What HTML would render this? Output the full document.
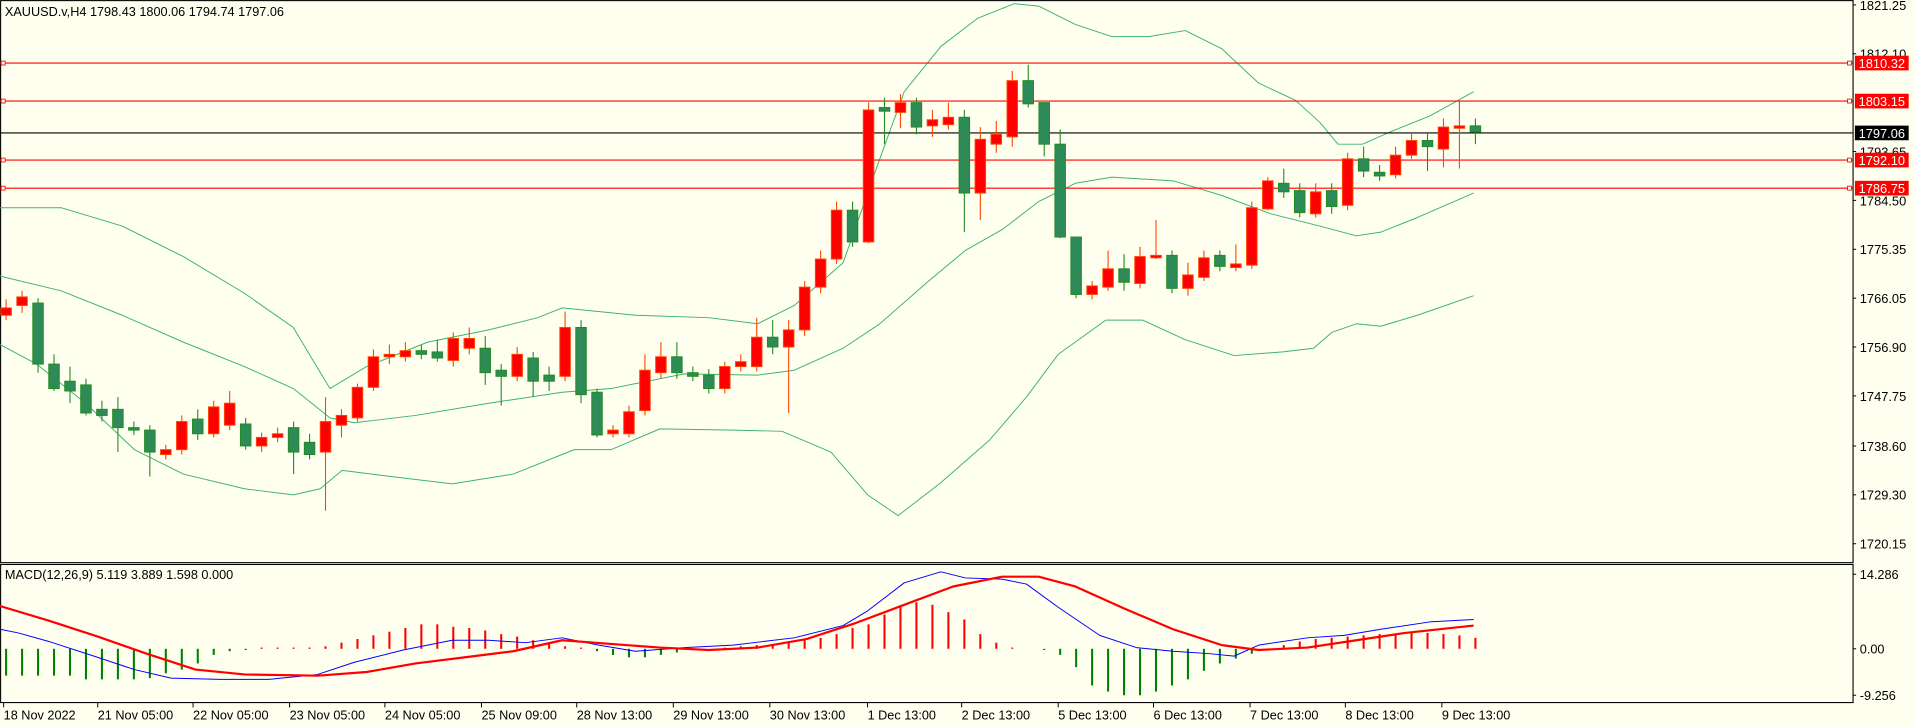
<!DOCTYPE html>
<html><head><meta charset="utf-8"><style>
html,body{margin:0;padding:0;background:#fffff0;overflow:hidden}
svg{display:block}
text{font-family:"Liberation Sans","DejaVu Sans",sans-serif;font-size:10.4px;fill:#000}
</style></head><body>
<svg id="s" width="1916" height="727" viewBox="0 0 1568 595" preserveAspectRatio="none" xmlns="http://www.w3.org/2000/svg"></svg>
<script>
var S=document.getElementById('s'),h='';
h+='<rect x="0" y="0" width="1568" height="595" fill="#fffff0"/>';
h+='<rect x="0.5" y="0.5" width="1516" height="460" fill="none" stroke="#000" stroke-width="0.9"/>';
h+='<rect x="0.5" y="462" width="1516" height="113" fill="none" stroke="#000" stroke-width="0.9"/>';
function pl(pts,c,w){return '<polyline fill="none" stroke="'+c+'" stroke-width="'+w+'" stroke-linejoin="round" points="'+pts.map(function(p){return p.join(',')}).join(' ')+'"/>';}
var up=[[0,170],[50,170],[100,185],[150,210],[200,240],[240,268],[270,318],[300,300],[350,280],[400,270],[440,260],[460,252],[520,258],[580,260],[620,265],[650,250],[690,215],[720,130],[740,75],[770,38],[800,15],[830,3],[850,5],[880,20],[910,30],[940,30],[970,25],[1000,40],[1030,68],[1060,82],[1080,100],[1095,118],[1115,118],[1140,107],[1170,95],[1206,75]];
var md=[[0,226],[50,238],[100,258],[150,280],[200,300],[240,318],[270,342],[290,346],[340,340],[400,330],[460,321],[500,318],[560,306],[620,307],[650,303],[690,285],[720,265],[760,230],[790,205],[820,188],[850,165],[880,150],[910,145],[960,148],[1000,160],[1040,175],[1080,185],[1110,193],[1130,190],[1160,178],[1206,158]];
var lo=[[0,282],[30,298],[70,330],[110,368],[150,388],[200,400],[240,405],[262,400],[280,385],[320,390],[370,396],[420,388],[470,368],[500,368],[540,351],[600,352],[640,353],[680,370],[710,405],[735,422],[770,395],[810,360],[840,325],[866,290],[905,262],[935,262],[970,278],[1010,291],[1050,288],[1075,285],[1090,272],[1110,265],[1130,267],[1160,258],[1206,242]];
h+=pl(up,'#3cb371',0.8)+pl(md,'#3cb371',0.8)+pl(lo,'#3cb371',0.8);
[51.6,82.7,131,154].forEach(function(y){h+='<line x1="0" x2="1516" y1="'+y+'" y2="'+y+'" stroke="#f00" stroke-width="0.9"/><rect x="1" y="'+(y-1.6)+'" width="3.2" height="3.2" fill="#fffff0" stroke="#f00" stroke-width="0.7"/><rect x="1512" y="'+(y-1.6)+'" width="3.2" height="3.2" fill="#fffff0" stroke="#f00" stroke-width="0.7"/>';});
h+='<line x1="0" x2="1516" y1="108.8" y2="108.8" stroke="#000" stroke-width="0.9"/>';
var C=[[1,252,258,245,262],[1,243,250,238,256],[0,248,298,244,305],[0,298,318,290,320],[0,312,320,300,330],[0,315,338,310,340],[0,335,340,328,345],[0,335,350,325,370],[0,350,352,345,356],[0,352,370,348,390],[1,368,372,364,376],[1,345,368,340,372],[0,343,355,335,360],[1,333,355,328,358],[1,330,348,320,352],[0,347,365,342,368],[1,358,365,354,370],[1,355,358,350,362],[0,350,370,345,388],[0,362,372,355,376],[1,345,370,325,418],[1,340,348,335,358],[1,317,342,314,345],[1,292,317,286,320],[1,290,292,282,298],[1,287,292,280,296],[0,287,290,282,294],[0,288,293,278,296],[1,277,295,272,300],[1,277,285,268,290],[0,285,305,275,315],[0,303,308,298,332],[1,290,308,284,312],[0,293,312,288,325],[0,307,312,300,320],[1,268,308,255,312],[0,268,323,262,330],[0,321,356,318,358],[1,352,355,348,358],[1,337,355,332,358],[1,303,336,290,340],[1,292,305,280,310],[0,292,305,280,310],[0,305,308,300,312],[0,307,318,302,322],[1,300,318,296,322],[1,296,300,290,304],[1,276,300,260,304],[0,276,284,262,290],[1,270,284,262,338],[1,235,270,230,275],[1,212,235,205,240],[1,172,212,165,216],[0,172,198,165,202],[1,90,198,84,199],[0,88,91,80,118],[1,84,92,77,105],[0,84,104,80,110],[1,98,103,90,112],[1,96,102,84,106],[0,96,158,90,190],[1,114,158,104,180],[1,110,118,99,125],[1,66,112,58,120],[0,66,85,53,88],[0,84,118,84,128],[0,118,194,106,195],[0,194,241,194,244],[1,234,241,230,245],[1,220,235,205,238],[0,220,231,208,238],[1,210,232,202,236],[1,209,211,180,212],[0,209,236,205,240],[1,225,236,215,242],[1,211,227,205,230],[0,209,218,205,222],[1,216,219,200,222],[1,170,217,165,220],[1,148,171,145,172],[0,150,157,138,162],[0,156,174,150,178],[1,157,175,150,178],[0,156,169,150,175],[1,130,168,125,172],[0,130,140,120,145],[0,141,144,135,148],[1,127,143,120,146],[1,115,127,108,130],[0,115,120,108,140],[1,104,122,97,137],[1,103,105,83,138],[0,103,108,97,118]];
function cx(i){return 5+i*13.07;}
C.forEach(function(c,i){var x=cx(i),f=c[0]?'#ff0000':'#2e8b57',b=c[0]?'#ff4500':'#228b22';
h+='<line x1="'+x+'" x2="'+x+'" y1="'+c[3]+'" y2="'+c[4]+'" stroke="'+b+'" stroke-width="0.9"/>';
h+='<rect x="'+(x-4.3)+'" y="'+c[1]+'" width="8.6" height="'+Math.max(c[2]-c[1],1)+'" fill="'+f+'" stroke="'+b+'" stroke-width="0.8"/>';});
var H=[-22,-22,-22,-22,-22,-25,-25,-25,-25,-24,-20,-17,-12,-5,-2,-1,1,1,1,1,2,5,8,11,14,17,20,20,18,17,15,12,10,7,4,2,1,-2,-5,-7,-7,-5,-3,-1,0,1,2,3,4,5,7,9,12,17,20,28,35,38,36,30,24,12,5,1,0,-1,-5,-15,-30,-35,-38,-38,-35,-30,-25,-18,-12,-8,-4,0,3,6,8,9,10,11,12,12,13,13,12,11,9];
H.forEach(function(v,i){if(i>=C.length)return;var x=cx(i);if(v==0)return;h+='<line x1="'+x+'" x2="'+x+'" y1="531" y2="'+(531-v)+'" stroke="'+(v>0?'#f00':'#008000')+'" stroke-width="1.7"/>';});
var bl=[[0,515],[15,518],[40,525],[80,538],[110,548],[140,555],[180,556],[220,556],[260,552],[290,542],[330,532],[370,524],[400,524],[430,526],[460,522],[490,528],[520,533],[560,530],[600,528],[650,522],[690,512],[710,500],[740,477],[770,468],[790,473],[820,474],[840,478],[866,497],[900,520],[930,530],[960,533],[990,535],[1010,537],[1030,528],[1070,522],[1100,520],[1130,515],[1170,509],[1206,507]];
var rl=[[0,496],[40,508],[80,521],[120,535],[160,548],[200,552],[260,553],[300,550],[340,543],[380,538],[420,533],[460,524],[500,527],[540,530],[580,532],[620,530],[660,523],[700,510],[740,495],[780,480],[820,472],[850,472],[880,480],[920,498],[960,515],[1000,528],[1030,532],[1070,530],[1110,524],[1150,518],[1206,512]];
h+=pl(bl,'#0000ff',0.8)+pl(rl,'#ff0000',1.8);
h+='<text x="4" y="13">XAUUSD.v,H4  1798.43 1800.06 1794.74 1797.06</text>';
h+='<text x="4" y="474">MACD(12,26,9) 5.119 3.889 1.598 0.000</text>';
[['1821.25',4],['1812.10',44],['1793.65',124],['1784.50',164],['1775.35',204],['1766.05',244],['1756.90',284],['1747.75',324],['1738.60',365],['1729.30',405],['1720.15',445]].forEach(function(t){h+='<line x1="1516" x2="1519" y1="'+t[1]+'" y2="'+t[1]+'" stroke="#000" stroke-width="0.8"/><text x="1522" y="'+(t[1]+4)+'" textLength="38" lengthAdjust="spacingAndGlyphs">'+t[0]+'</text>';});
[['14.286',470],['0.00',531],['-9.256',569]].forEach(function(t){h+='<line x1="1516" x2="1519" y1="'+t[1]+'" y2="'+t[1]+'" stroke="#000" stroke-width="0.8"/><text x="1522" y="'+(t[1]+4)+'">'+t[0]+'</text>';});
[['1810.32',51.6,'#f00'],['1803.15',82.7,'#f00'],['1797.06',108.8,'#000'],['1792.10',131,'#f00'],['1786.75',154,'#f00']].forEach(function(t){h+='<rect x="1518" y="'+(t[1]-6)+'" width="44" height="12" fill="'+t[2]+'"/><text x="1521" y="'+(t[1]+4)+'" textLength="38" lengthAdjust="spacingAndGlyphs" style="fill:#fff">'+t[0]+'</text>';});
[['18 Nov 2022',3],['21 Nov 05:00',80],['22 Nov 05:00',158],['23 Nov 05:00',237],['24 Nov 05:00',315],['25 Nov 09:00',394],['28 Nov 13:00',472],['29 Nov 13:00',551],['30 Nov 13:00',630],['1 Dec 13:00',710],['2 Dec 13:00',787],['5 Dec 13:00',866],['6 Dec 13:00',944],['7 Dec 13:00',1023],['8 Dec 13:00',1101],['9 Dec 13:00',1180]].forEach(function(t){h+='<line x1="'+t[1]+'" x2="'+t[1]+'" y1="575" y2="579" stroke="#000" stroke-width="0.8"/><text x="'+t[1]+'" y="589">'+t[0]+'</text>';});
S.innerHTML=h;
</script>
</body></html>
